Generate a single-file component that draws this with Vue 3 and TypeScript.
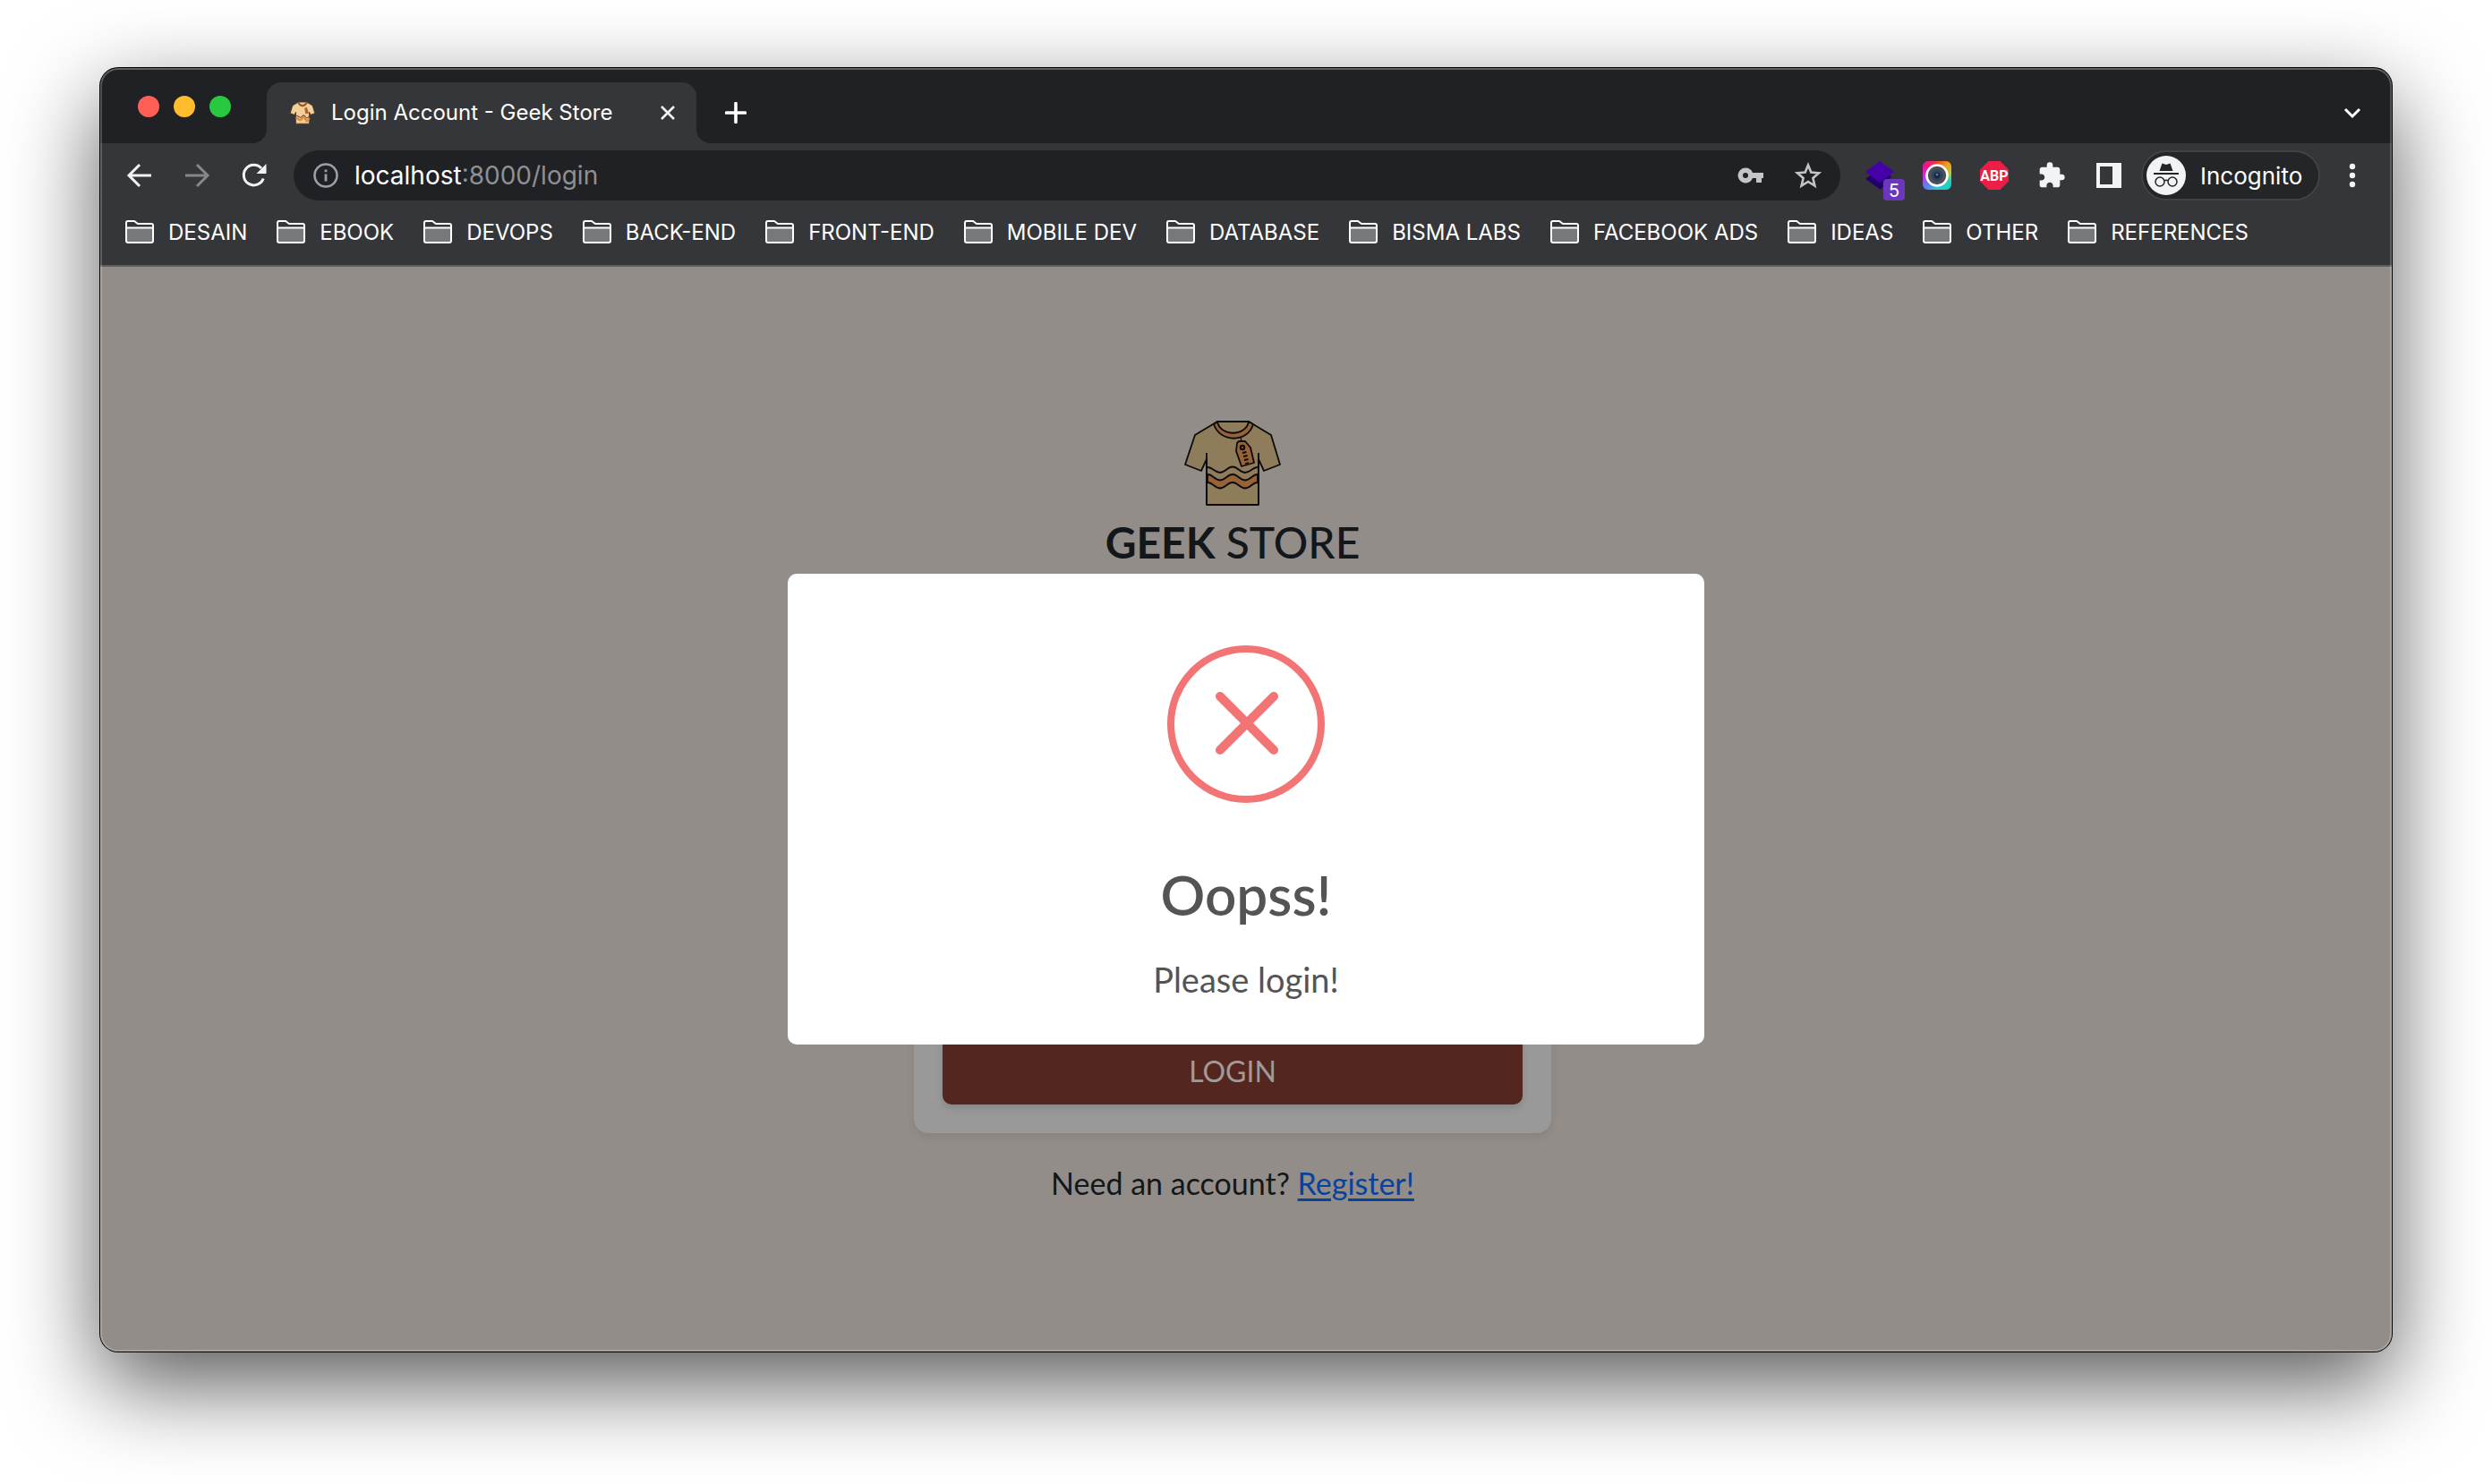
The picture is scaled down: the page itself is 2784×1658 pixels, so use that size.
<script setup lang="ts">
import { ref } from 'vue'

const bookmarks: string[] = [
  'DESAIN', 'EBOOK', 'DEVOPS', 'BACK-END', 'FRONT-END', 'MOBILE DEV',
  'DATABASE', 'BISMA LABS', 'FACEBOOK ADS', 'IDEAS', 'OTHER', 'REFERENCES',
]
const path = ref(':8000/login')
</script>

<template>
  <div class="stage">
    <div class="window">
      <header class="tabstrip">
        <div class="lights">
          <button class="light red" aria-label="Close window"></button>
          <button class="light amber" aria-label="Minimise window"></button>
          <button class="light green" aria-label="Zoom window"></button>
        </div>
        <div class="tab">
          <svg class="favicon" viewBox="0 0 108 96">
            <path d="M36 2H72L97 17L107 50L89 57L83 45V95H25V45L19 57L1 50L11 17Z" fill="#f3cf9a" stroke="#4a3524" stroke-width="3" />
            <path d="M34 3Q54 32 74 3" fill="none" stroke="#9a5a2c" stroke-width="8" />
            <path d="M25 60q7 0 14 6t14-3 14 3 16-6" fill="none" stroke="#6b513b" stroke-width="4" />
            <path d="M25 71q7 0 14 6t14-5 14 5 16-6" fill="none" stroke="#e58a3c" stroke-width="9" />
            <path d="M62 28l11-3 8 25-14 3z" fill="#b4602a" />
          </svg>
          <span class="tab-title">Login Account - Geek Store</span>
          <button class="icon-btn tab-close" aria-label="Close tab">
            <svg width="20" height="20" viewBox="0 0 20 20"><path d="M3 3L17 17M17 3L3 17" stroke="#f1f3f4" stroke-width="2.6" /></svg>
          </button>
        </div>
        <button class="icon-btn plus" aria-label="New tab">
          <svg width="24" height="24" viewBox="0 0 24 24"><path d="M12 1.500V22.500M1.500 12H22.500" stroke="#fff" stroke-width="3.600" stroke-linecap="round" /></svg>
        </button>
        <button class="icon-btn chevron" aria-label="Search tabs">
          <svg width="24" height="24" viewBox="0 0 24 24"><path d="M4 8L12 16L20 8" fill="none" stroke="#fff" stroke-width="3" /></svg>
        </button>
      </header>

      <div class="toolbar">
        <nav class="nav">
          <button class="icon-btn" aria-label="Back">
            <svg width="32" height="32" viewBox="0 0 32 32"><path d="M29 16H5M16 4L4 16L16 28" fill="none" stroke="#f1f3f4" stroke-width="3" /></svg>
          </button>
          <button class="icon-btn" aria-label="Forward">
            <svg width="32" height="32" viewBox="0 0 32 32"><path d="M3 16H27M16 4L28 16L16 28" fill="none" stroke="#85878a" stroke-width="3" /></svg>
          </button>
          <button class="icon-btn" aria-label="Reload">
            <svg width="32" height="32" viewBox="0 0 32 32">
              <path d="M26.200 19.500A11.300 11.300 0 1 1 24 8" fill="none" stroke="#f1f3f4" stroke-width="3" />
              <path d="M29.500 3V14H18.500Z" fill="#f1f3f4" />
            </svg>
          </button>
        </nav>

        <label class="omnibox">
          <svg width="28" height="28" viewBox="0 0 28 28">
            <circle cx="14" cy="14" r="12.500" fill="none" stroke="#9aa0a6" stroke-width="2.600" />
            <path d="M14 12.500V20.500M14 7.500V10.200" stroke="#9aa0a6" stroke-width="2.800" />
          </svg>
          <span class="host">localhost</span>
          <input v-model="path" class="path" type="text" aria-label="Address" />
          <button class="icon-btn key" aria-label="Passwords">
            <svg width="30" height="20" viewBox="0 0 30 20">
              <path fill-rule="evenodd" fill="#c4c5c7" d="M9 1.500a8.500 8.500 0 0 1 8 5.500H29V13H27V18H21V13H17A8.500 8.500 0 1 1 9 1.500ZM9 7a3 3 0 1 0 0 6a3 3 0 0 0 0-6Z" />
            </svg>
          </button>
          <button class="icon-btn" aria-label="Bookmark this tab">
            <svg width="32" height="32" viewBox="0 0 32 32">
              <path d="M16 4.500L19.300 12.600L28 13.300L21.400 19L23.400 27.500L16 23L8.600 27.500L10.600 19L4 13.300L12.700 12.600Z" fill="none" stroke="#c4c5c7" stroke-width="2.600" />
            </svg>
          </button>
        </label>

        <div class="extensions">
          <button class="icon-btn layers" aria-label="Layers extension, 5 items">
            <svg width="32" height="32" viewBox="0 0 32 32">
              <path d="M0 20L16 8L29 17L17 32Z" fill="#24006e" />
              <path d="M16 0L32 12L16 24L0 12Z" fill="#4500a8" />
            </svg>
            <span class="count">5</span>
          </button>
          <button class="icon-btn camera" aria-label="Screenshot extension">
            <svg width="32" height="32" viewBox="0 0 32 32">
              <circle cx="16" cy="16" r="11.500" fill="#4b4e57" stroke="#fff" stroke-width="2.600" />
              <circle cx="16" cy="16" r="6.500" fill="#33435c" />
              <circle cx="16" cy="16" r="3.500" fill="#162a49" />
              <circle cx="16" cy="15" r="1.300" fill="#5d80aa" />
            </svg>
          </button>
          <button class="icon-btn abp" aria-label="Adblock Plus">ABP</button>
          <button class="icon-btn" aria-label="Extensions">
            <svg width="32" height="32" viewBox="0 0 24 24">
              <path fill="#f1f3f4" d="M20.500 11H19V7c0-1.100-.9-2-2-2h-4V3.500a2.500 2.500 0 0 0-5 0V5H4c-1.100 0-1.990.9-1.990 2v3.800H3.500c1.490 0 2.700 1.210 2.700 2.700s-1.210 2.700-2.700 2.700H2V20c0 1.100.9 2 2 2h3.800v-1.500c0-1.490 1.210-2.700 2.700-2.700s2.700 1.210 2.700 2.700V22H17c1.100 0 2-.9 2-2v-4h1.500a2.500 2.500 0 0 0 0-5z" />
            </svg>
          </button>
          <button class="icon-btn" aria-label="Side panel">
            <svg width="32" height="32" viewBox="0 0 32 32"><path fill="#f1f3f4" fill-rule="evenodd" d="M2 2H30V30H2ZM6 6V26H20V6Z" /></svg>
          </button>
        </div>

        <button class="incognito">
          <svg width="44" height="44" viewBox="0 0 44 44">
            <circle cx="22" cy="22" r="22" fill="#f1f3f4" />
            <path d="M17.500 8.500L22 10L26.500 8.500L29.500 17H14.500Z" fill="#242529" />
            <path d="M8 20H36" stroke="#242529" stroke-width="1.800" />
            <circle cx="15" cy="29" r="5" fill="none" stroke="#242529" stroke-width="1.500" />
            <circle cx="29" cy="29" r="5" fill="none" stroke="#242529" stroke-width="1.500" />
            <path d="M20 28Q22 26.500 24 28" fill="none" stroke="#242529" stroke-width="1.500" />
          </svg>
          <span>Incognito</span>
        </button>
        <button class="icon-btn" aria-label="Menu">
          <svg width="24" height="32" viewBox="0 0 24 32" fill="#f1f3f4">
            <circle cx="12" cy="6" r="3.200" /><circle cx="12" cy="16" r="3.200" /><circle cx="12" cy="26" r="3.200" />
          </svg>
        </button>
      </div>

      <nav class="bookmarks">
        <button v-for="name in bookmarks" :key="name" class="bookmark">
          <svg width="32" height="26" viewBox="0 0 32 26">
            <path d="M1 3Q1 1 3 1H10L14 4H29Q31 4 31 6V23Q31 25 29 25H3Q1 25 1 23Z" fill="#35363a" />
            <path d="M1 9H31V24H1Z" fill="#77787b" />
            <path d="M1 3Q1 1 3 1H10L14 4H29Q31 4 31 6V23Q31 25 29 25H3Q1 25 1 23ZM1 8.500H31" fill="none" stroke="#fff" stroke-width="2" />
          </svg>
          <span>{{ name }}</span>
        </button>
      </nav>

      <main class="page">
        <section class="login">
          <svg class="shirt" viewBox="0 0 112 112" stroke="#0b0b0b" stroke-width="1.800" stroke-linejoin="round">
            <path d="M39 9H74L99 24L109 57L91 64L85 51V102H27V51L21 64L3 57L14 24Z" fill="#8f7c5b" />
            <path d="M27 44V102M85 44V102" fill="none" />
            <path d="M35 12L39 9C42 26 71 26 74 9L79 12C73 33 42 33 35 12Z" fill="#986237" />
            <path d="M28 60C34 60 36 66 42 66S50 59.500 56 59.500S64 66 70 66S78 60 84 60" fill="none" />
            <path d="M28 68C34 68 36 74.500 42 74.500S50 68 56 68S64 74.500 70 74.500S78 68 84 68V77C78 77 76 83.500 70 83.500S62 77 56 77S48 83.500 42 83.500S34 77 28 77Z" fill="#986237" />
            <path d="M65 26L67 37" fill="none" stroke-width="1.300" />
            <path d="M61 33L63 31L70 31L76 38L80 55L66 59L60 42Z" fill="#986237" />
            <circle cx="67" cy="38" r="2.200" fill="#7a4d29" stroke-width="2" />
            <path d="M67 44L71.500 43M68 48L72.500 47M69 52L73.500 51M70 56L74 55" fill="none" />
          </svg>
          <h1 class="brand"><b>GEEK</b> STORE</h1>
          <form class="card" @submit.prevent>
            <button class="submit" type="submit">LOGIN</button>
          </form>
          <p class="register">Need an account? <a href="#register">Register!</a></p>
        </section>

        <div class="overlay">
          <div class="modal" role="dialog" aria-labelledby="alert-title">
            <svg class="error" viewBox="0 0 176 176" fill="none" stroke="#f27474">
              <circle cx="88" cy="88" r="84" stroke-width="8" />
              <path d="M59 57L119 117M119 57L59 117" stroke-width="10" stroke-linecap="round" />
            </svg>
            <h2 id="alert-title">Oopss!</h2>
            <p>Please login!</p>
          </div>
        </div>
      </main>
    </div>
  </div>
</template>

<style>
body {
  margin: 0;
  background: #fff;
}
</style>

<style scoped>
* {
  box-sizing: border-box;
}
button {
  border: 0;
  padding: 0;
  background: none;
  color: inherit;
  font: inherit;
}
svg {
  display: block;
  flex: none;
}
.stage {
  display: flex;
  min-height: 100vh;
  padding: 76px 112px 148px;
  overflow: hidden;
  font-family: Inter, "Liberation Sans", sans-serif;
}
.window {
  position: relative;
  flex: 1;
  display: flex;
  flex-direction: column;
  border-radius: 20px;
  overflow: hidden;
  background: #35363a;
  color: #fff;
  box-shadow: 0 0 0 1px #000, 0 36px 100px rgba(0, 0, 0, 0.66);
}
.window::after {
  content: "";
  position: absolute;
  inset: 0;
  border-radius: 20px;
  box-shadow: inset 0 0 0 2px rgba(255, 255, 255, 0.18), inset 0 1px 0 1px rgba(255, 255, 255, 0.12);
  pointer-events: none;
}
.icon-btn {
  display: flex;
  align-items: center;
  justify-content: center;
  flex: none;
}

.tabstrip {
  display: flex;
  align-items: flex-end;
  height: 84px;
  padding: 0 32px 0 42px;
  background: #202124;
}
.lights {
  display: flex;
  gap: 16px;
  width: 144px;
  height: 84px;
  padding-top: 31px;
}
.light {
  width: 24px;
  height: 24px;
  border-radius: 50%;
}
.red { background: #ff5f57; }
.amber { background: #febc2e; }
.green { background: #28c840; }
.tab {
  position: relative;
  display: flex;
  align-items: center;
  width: 480px;
  height: 68px;
  padding: 0 22px 0 26px;
  border-radius: 16px 16px 0 0;
  background: #35363a;
}
.tab::before,
.tab::after {
  content: "";
  position: absolute;
  bottom: 0;
  width: 16px;
  height: 16px;
}
.tab::before {
  right: 100%;
  background: radial-gradient(circle at 0 0, transparent 16px, #35363a 16px);
}
.tab::after {
  left: 100%;
  background: radial-gradient(circle at 100% 0, transparent 16px, #35363a 16px);
}
.favicon {
  width: 28px;
  height: 26px;
}
.tab-title {
  flex: 1;
  margin-left: 18px;
  font-size: 24px;
  line-height: 32px;
  white-space: nowrap;
}
.plus {
  height: 68px;
  margin-left: 32px;
}
.chevron {
  height: 68px;
  margin-left: auto;
}

.toolbar {
  display: flex;
  align-items: center;
  height: 72px;
  padding: 0 32px 0 28px;
}
.nav {
  display: flex;
  gap: 32px;
}
.omnibox {
  flex: 1;
  display: flex;
  align-items: center;
  height: 56px;
  margin-left: 28px;
  padding: 0 20px 0 22px;
  border-radius: 28px;
  background: #202124;
  font-size: 28px;
}
.host {
  margin-left: 18px;
}
.path {
  flex: 1;
  min-width: 0;
  padding: 0;
  border: 0;
  outline: 0;
  background: none;
  color: #8f9093;
  font: inherit;
}
.key {
  margin-right: 33px;
}
.extensions {
  display: flex;
  align-items: center;
  gap: 32px;
  margin: 0 20px 0 28px;
}
.layers {
  position: relative;
}
.count {
  position: absolute;
  left: 20px;
  top: 20px;
  width: 24px;
  height: 24px;
  border-radius: 4px;
  background: #6b38bd;
  font-size: 20px;
  line-height: 26px;
}
.camera {
  border-radius: 6px;
  background: conic-gradient(#f0402a, #f0a020 45deg, #b5cf30 80deg, #22d0b0 115deg, #22c8e0 180deg, #5a80f0 225deg, #d030d0 270deg, #f01090 310deg, #f0402a);
}
.abp {
  width: 32px;
  height: 32px;
  background: #ed1e45;
  clip-path: polygon(30% 0, 70% 0, 100% 30%, 100% 70%, 70% 100%, 30% 100%, 0 70%, 0 30%);
  font-family: Roboto, sans-serif;
  font-size: 16px;
  font-weight: 700;
}
.incognito {
  display: flex;
  align-items: center;
  gap: 16px;
  width: 200px;
  height: 56px;
  margin-right: 24px;
  padding-left: 4px;
  border: 2px solid #414246;
  border-radius: 28px;
  background: #242529;
  font-size: 26px;
}

.bookmarks {
  display: flex;
  gap: 33px;
  height: 66px;
  padding: 0 28px;
  border-bottom: 2px solid #5c5c5e;
}
.bookmark {
  display: flex;
  align-items: center;
  gap: 16px;
  height: 54px;
  font-size: 24px;
  white-space: nowrap;
}

.page {
  position: relative;
  flex: 1;
  display: flex;
  align-items: center;
  justify-content: center;
  padding-right: 30px;
  background: #938d8a;
  color: #14171a;
  font-family: Lato, "Open Sans", sans-serif;
}
.login {
  display: flex;
  flex-direction: column;
  align-items: center;
  width: 712px;
}
.shirt {
  width: 112px;
  height: 112px;
}
.brand {
  margin: 0 0 26px;
  font-size: 48px;
  font-weight: 500;
  line-height: 64px;
}
.card {
  display: flex;
  align-items: flex-end;
  width: 100%;
  height: 602px;
  padding: 32px;
  border-radius: 16px;
  background: #999;
  box-shadow: 0 4px 8px rgba(0, 0, 0, 0.08);
}
.submit {
  width: 100%;
  height: 76px;
  border-radius: 10px;
  background: #54261f;
  box-shadow: 0 4px 8px rgba(0, 0, 0, 0.12);
  color: #a09a98;
  font-size: 32px;
}
.register {
  margin: 32px 0 0;
  font-size: 34px;
  line-height: 48px;
}
.register a {
  color: #08429a;
  text-underline-offset: 4px;
}
.overlay {
  position: absolute;
  inset: 0;
  display: flex;
  align-items: center;
  justify-content: center;
}
.modal {
  display: flex;
  flex-direction: column;
  align-items: center;
  width: 1024px;
  padding: 80px 32px 46px;
  border-radius: 10px;
  background: #fff;
  color: #545454;
}
.error {
  width: 176px;
  height: 176px;
}
.modal h2 {
  margin: 66px 0 0;
  font-size: 62px;
  font-weight: 600;
  line-height: 72px;
}
.modal p {
  margin: 32px 0 0;
  font-size: 38px;
  line-height: 54px;
}
</style>
